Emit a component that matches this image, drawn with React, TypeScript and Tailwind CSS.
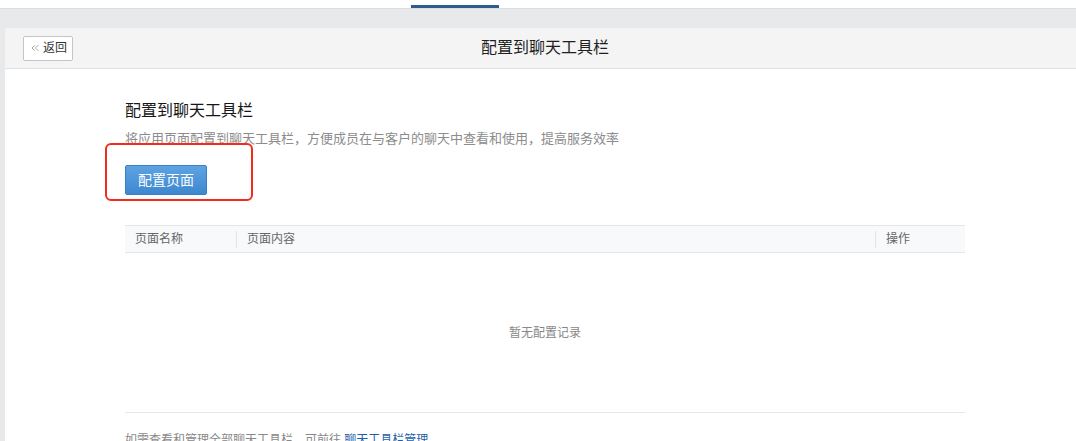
import { ChevronsLeft } from "lucide-react";

const font = "font-['Liberation_Sans','Noto_Sans_CJK_SC',sans-serif]";

const columns = [
  { title: "页面名称", width: "w-[111px]", first: true },
  { title: "页面内容", width: "flex-1", first: false },
  { title: "操作", width: "w-[90px]", first: false },
];

export default function App() {
  return (
    <div className={`${font} w-[1076px] h-[441px] overflow-hidden bg-[#e8e9eb] flex flex-col`}>
      {/* top nav strip with active tab */}
      <div className="h-[9px] shrink-0 bg-white border-b border-[#dcdddf] flex pl-[411px]">
        <div className="w-[88px] h-[3px] mt-auto bg-[#2f5b8d]" />
      </div>

      <div className="flex-1 pt-[19px] pl-[5px]">
        <div className="w-[1080px] h-full bg-white rounded-tl-[4px] flex flex-col">
          {/* header */}
          <div className="h-[41px] shrink-0 bg-[#f4f4f4] border-b border-[#dde2ea] rounded-tl-[4px] grid grid-cols-[1fr_auto_1fr] items-center">
            <div className="pl-[18px]">
              <button className="h-[25px] w-[50px] flex items-center justify-center gap-[2px] bg-white border border-[#c3c5c8] rounded-[2px] text-[12px] text-[#333]">
                <ChevronsLeft className="w-[12px] h-[12px] text-[#777]" strokeWidth={1.3} />
                返回
              </button>
            </div>
            <div className="text-[16px] text-[#1f1f1f]">配置到聊天工具栏</div>
            <div />
          </div>

          {/* body */}
          <div className="relative pl-[120px] pt-[30px] w-[960px]">
            <h2 className="text-[16px] leading-6 text-[#161616]">配置到聊天工具栏</h2>
            <p className="mt-[6px] text-[13px] leading-5 text-[#8c8c8c]">
              将应用页面配置到聊天工具栏，方便成员在与客户的聊天中查看和使用，提高服务效率
            </p>
            <button className="mt-[16px] w-[82px] h-[30px] rounded-[2px] border border-[#3a80c6] bg-gradient-to-b from-[#5ea3e2] to-[#3d88d0] text-white text-[14px]">
              配置页面
            </button>

            {/* annotation */}
            <div className="absolute left-[100px] top-[74px] w-[148px] h-[58px] border-2 border-[#f42a1d] rounded-[6px]" />

            {/* table */}
            <div className="mt-[30px] w-[840px]">
              <div className="h-[28px] bg-[#f8f9fb] border-y border-[#e3e5e8] flex items-center text-[12px] text-[#666]">
                {columns.map((c) => (
                  <div key={c.title} className={`${c.width} flex items-center h-full`}>
                    {!c.first && <div className="w-px h-[17px] bg-[#e1e3e6]" />}
                    <span className="pl-[10px]">{c.title}</span>
                  </div>
                ))}
              </div>
              <div className="h-[160px] border-b border-[#e6e7e9] flex items-center justify-center text-[12px] text-[#888]">
                暂无配置记录
              </div>
              <p className="mt-[17px] text-[12px] leading-5 text-[#888]">
                如需查看和管理全部聊天工具栏，可前往 <span className="text-[#1f5ea8]">聊天工具栏管理</span>
              </p>
            </div>
          </div>
        </div>
      </div>
    </div>
  );
}
